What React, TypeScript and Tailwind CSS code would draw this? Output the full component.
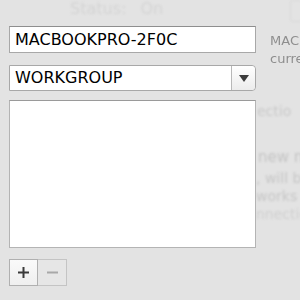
export default function App() {
  return (
    <div className="w-[300px] h-[300px] overflow-hidden bg-[#e3e3e3] font-['DejaVu_Sans',sans-serif]">
      {/* faded window behind the sheet */}
      <div className="h-[26px] flex items-start pl-[70px] text-[16px] leading-[18px] text-[#d4d4d4] blur-[1px]">
        <span>Status:</span>
        <span className="ml-[14px]">On</span>
        <div className="ml-auto mr-[-4px] w-[14px] h-[22px] border border-[#d8d8d8] rounded-[3px]" />
      </div>
      <div className="flex">
        <div className="ml-[9px] w-[247px] shrink-0">
          <div className="h-[27px] bg-white border border-[#a8a8a8] border-t-[#8e8e8e] flex items-center pl-[5px] text-[16px] text-black">
            MACBOOKPRO-2F0C
          </div>
          <div className="mt-[12px] h-[26px] bg-white border border-[#a8a8a8] rounded-r-[4px] flex items-center text-[16px] text-black">
            <span className="pl-[5px] flex-1">WORKGROUP</span>
            <div className="w-[24px] h-full border-l border-[#b8b8b8] bg-gradient-to-b from-[#ffffff] to-[#ececec] rounded-r-[4px] flex items-center justify-center">
              <svg width="10" height="7" viewBox="0 0 10 7">
                <path d="M0 0 H10 L5 7 Z" fill="#3c3c3c" />
              </svg>
            </div>
          </div>
          <div className="mt-[9px] h-[148px] bg-white border border-[#b4b4b4] border-t-[#9a9a9a]" />
          <div className="mt-[11px] flex">
            <div className="w-[29px] h-[27px] border border-[#b0b0b0] bg-gradient-to-b from-[#fafafa] to-[#efefef] flex items-center justify-center">
              <svg width="11" height="11" viewBox="0 0 11 11">
                <path d="M4.5 0 H6.5 V4.5 H11 V6.5 H6.5 V11 H4.5 V6.5 H0 V4.5 H4.5 Z" fill="#3a3a3a" />
              </svg>
            </div>
            <div className="w-[29px] h-[27px] border border-l-0 border-[#c4c4c4] bg-[#e6e6e6] flex items-center justify-center">
              <svg width="11" height="11" viewBox="0 0 11 11">
                <rect x="0" y="4.5" width="11" height="2" fill="#a8a8a8" />
              </svg>
            </div>
          </div>
        </div>
        <div className="ml-[14px] text-[13px] leading-[18px] whitespace-nowrap">
          <div className="mt-[6px] text-[#8e8e8e] blur-[0.6px]">MAC</div>
          <div className="text-[#8e8e8e] blur-[0.6px]">curre</div>
          <div className="mt-[34px] ml-[-13px] text-[#c9c9c9] blur-[1px] text-[14px]">ectio</div>
          <div className="mt-[28px] ml-[-12px] text-[#c4c4c4] blur-[1px] text-[15px]">new n</div>
          <div className="mt-[3px] ml-[-14px] text-[#c6c6c6] blur-[1px] text-[14px]">, will be</div>
          <div className="ml-[-14px] text-[#c6c6c6] blur-[1px] text-[14px]">works a</div>
          <div className="ml-[-14px] text-[#cfcfcf] blur-[1px] text-[14px]">nnection</div>
        </div>
      </div>
    </div>
  );
}
